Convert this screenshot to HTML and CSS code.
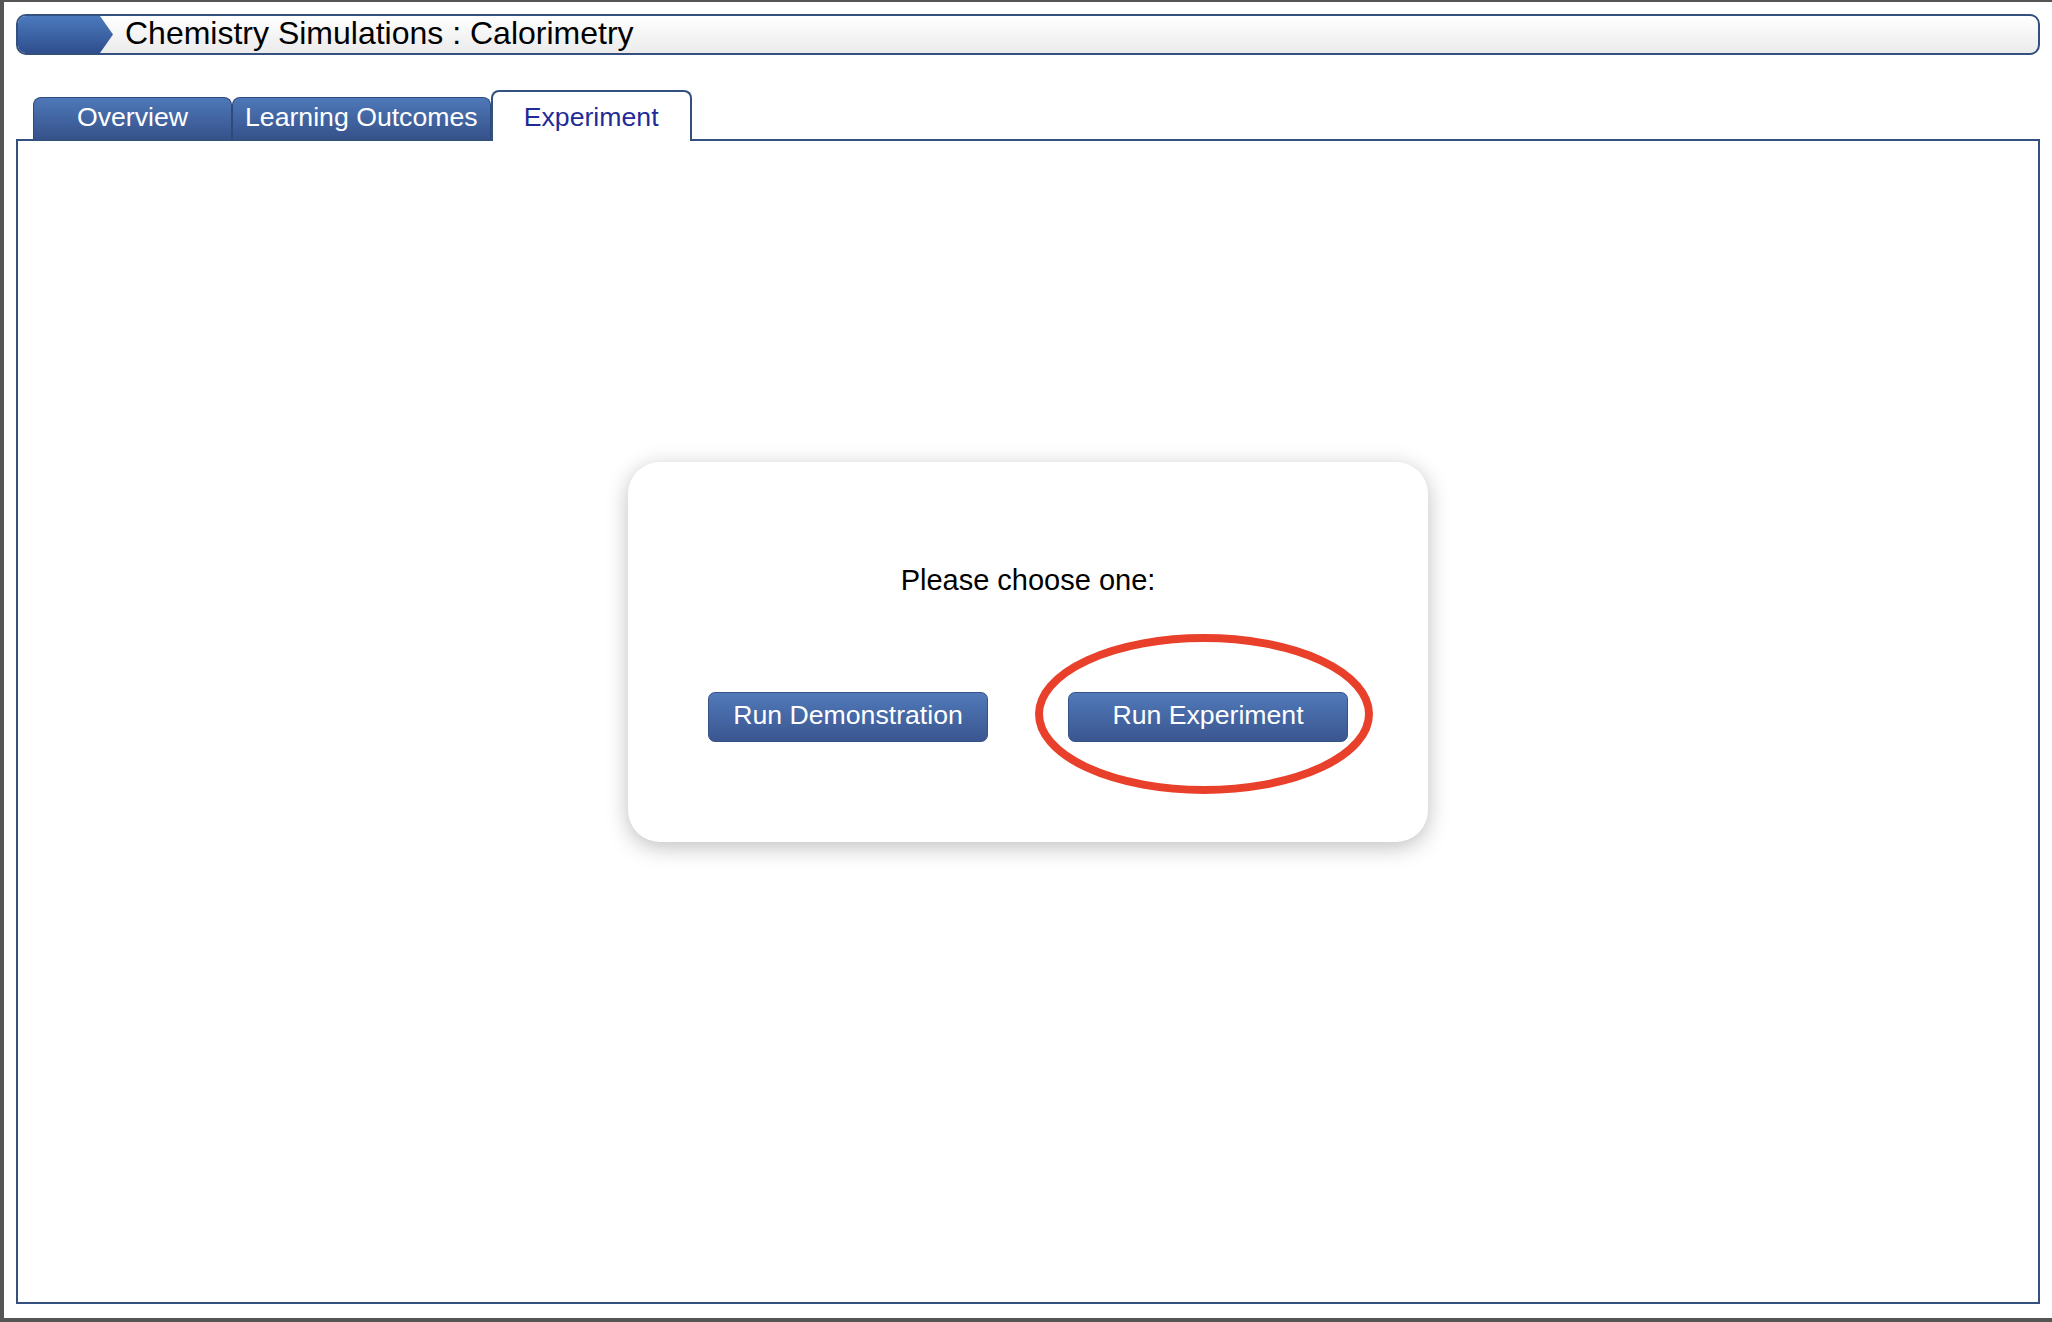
FILE: index.html
```html
<!DOCTYPE html>
<html lang="en">
<head>
<meta charset="utf-8">
<title>Chemistry Simulations : Calorimetry</title>
<link rel="stylesheet" href="styles.css">
</head>
<body>
<div class="window">
  <header class="titlebar">
    <div class="chevron"></div>
    <h1 class="title">Chemistry Simulations : Calorimetry</h1>
  </header>
  <nav class="tabs">
    <div class="tab">Overview</div>
    <div class="tab">Learning Outcomes</div>
    <div class="tab tab-active">Experiment</div>
  </nav>
  <main class="panel">
    <section class="dialog">
      <p class="prompt">Please choose one:</p>
      <div class="choices">
        <button class="btn">Run Demonstration</button>
        <span class="highlight">
          <button class="btn">Run Experiment</button>
          <svg class="circle" width="338" height="160" viewBox="0 0 338 160" aria-hidden="true">
            <ellipse cx="169" cy="80" rx="165" ry="76" fill="none" stroke="#e8402a" stroke-width="8"/>
          </svg>
        </span>
      </div>
    </section>
  </main>
</div>
</body>
</html>
```
FILE: styles.css
```css
html, body {
  margin: 0;
  padding: 0;
}
body {
  background: #555555;
  width: 2052px;
  height: 1322px;
  overflow: hidden;
  padding: 2px 0 0 4px;
  box-sizing: border-box;
  font-family: "Liberation Sans", Arial, Helvetica, sans-serif;
}
.window {
  background: #ffffff;
  height: 1316px;
  box-sizing: border-box;
  padding: 12px 12px 14px 12px;
  display: flex;
  flex-direction: column;
}
.titlebar {
  height: 41px;
  box-sizing: border-box;
  border: 2px solid #34507f;
  border-radius: 10px;
  background: linear-gradient(#ffffff, #ebebeb);
  overflow: hidden;
  display: flex;
  align-items: center;
}
.chevron {
  width: 95px;
  height: 100%;
  background: linear-gradient(#4b7abc, #2f4e8e);
  clip-path: polygon(0 0, 82px 0, 95px 50%, 82px 100%, 0 100%);
  flex: none;
}
.title {
  margin: 0 0 0 12px;
  padding-bottom: 3px;
  font-size: 32px;
  font-weight: normal;
  line-height: 32px;
  color: #000;
}
.tabs {
  margin-top: 35px;
  padding-left: 17px;
  display: flex;
  align-items: flex-end;
}
.tab {
  min-width: 199px;
  height: 42px;
  box-sizing: border-box;
  padding: 0 12px 2px;
  border: 1px solid #2e4a7a;
  border-bottom: none;
  border-radius: 8px 8px 0 0;
  background: linear-gradient(#4e78b8, #36528b);
  color: #ffffff;
  font-size: 26.67px;
  line-height: 38px;
  text-align: center;
  white-space: nowrap;
}
.tab-active {
  min-width: 201px;
  height: 51px;
  margin-bottom: -2px;
  padding: 6px 12px 5px;
  border: 2px solid #34507f;
  border-bottom: none;
  background: #ffffff;
  color: #1f2b96;
  position: relative;
  z-index: 1;
}
.panel {
  flex: 1;
  border: 2px solid #34507f;
  background: #ffffff;
  display: flex;
  flex-direction: column;
  align-items: center;
  padding-top: 321px;
}
.dialog {
  width: 800px;
  box-sizing: border-box;
  padding: 100px 80px;
  border-radius: 32px;
  background: #ffffff;
  box-shadow: 0 5px 22px rgba(0, 0, 0, 0.26);
  display: flex;
  flex-direction: column;
  align-items: center;
}
.prompt {
  margin: 0;
  font-size: 29px;
  line-height: 36px;
  color: #000;
}
.choices {
  margin-top: 94px;
  display: flex;
  gap: 80px;
}
.btn {
  width: 280px;
  height: 50px;
  box-sizing: border-box;
  padding: 0 0 4px;
  border: 1px solid #36528a;
  border-radius: 7px;
  background: linear-gradient(#5179b9, #3a5690);
  color: #ffffff;
  font-family: "Liberation Sans", Arial, Helvetica, sans-serif;
  font-size: 26.67px;
  line-height: 44px;
  display: block;
}
.highlight {
  position: relative;
  display: block;
}
.circle {
  position: absolute;
  left: -33px;
  top: -58px;
  pointer-events: none;
}
```
